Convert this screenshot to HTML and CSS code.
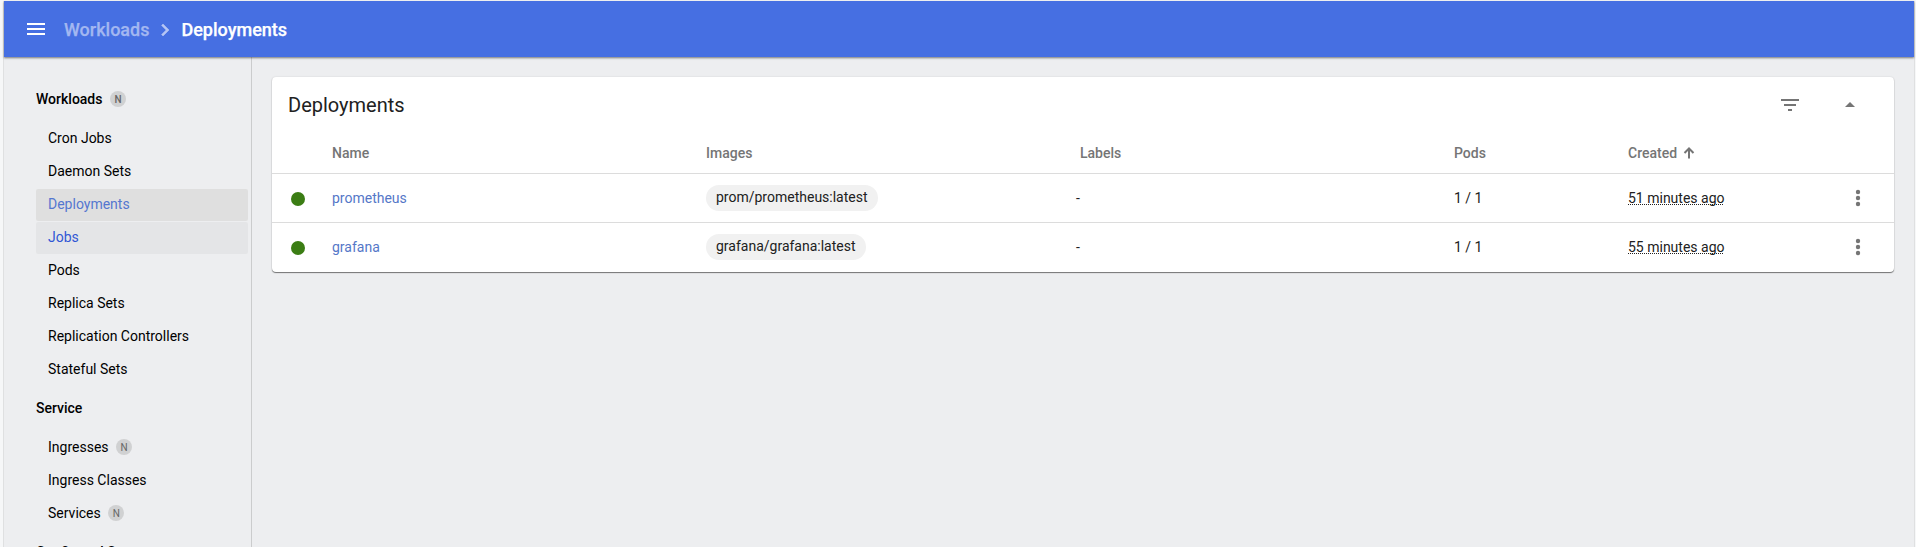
FILE: index.html
```html
<!DOCTYPE html>
<html lang="en">
<head>
<meta charset="utf-8">
<title>Deployments</title>
<link rel="stylesheet" href="styles.css">
</head>
<body>
<div class="app">
  <header class="toolbar">
    <svg class="menu-icon" width="24" height="24" viewBox="0 0 24 24"><path d="M3 18h18v-2H3v2zm0-5h18v-2H3v2zm0-7v2h18V6H3z"/></svg>
    <nav class="crumbs">
      <span class="crumb parent">Workloads</span>
      <svg class="chevron" width="24" height="24" viewBox="0 0 24 24"><path d="M10 6 8.59 7.41 13.17 12l-4.58 4.59L10 18l6-6z"/></svg>
      <span class="crumb">Deployments</span>
    </nav>
  </header>
  <div class="body">
    <aside class="sidebar">
      <div class="group">Workloads<span class="badge">N</span></div>
      <div class="item">Cron Jobs</div>
      <div class="item">Daemon Sets</div>
      <div class="item active">Deployments</div>
      <div class="item hover">Jobs</div>
      <div class="item">Pods</div>
      <div class="item">Replica Sets</div>
      <div class="item">Replication Controllers</div>
      <div class="item">Stateful Sets</div>
      <div class="group">Service</div>
      <div class="item">Ingresses<span class="badge">N</span></div>
      <div class="item">Ingress Classes</div>
      <div class="item">Services<span class="badge">N</span></div>
      <div class="group">Config and Storage</div>
    </aside>
    <main class="content">
      <section class="card">
        <div class="card-head">
          <h1 class="title">Deployments</h1>
          <svg class="icon filter" width="24" height="24" viewBox="0 0 24 24"><path d="M10 18h4v-2h-4v2zM3 6v2h18V6H3zm3 7h12v-2H6v2z"/></svg>
          <svg class="icon" width="24" height="24" viewBox="0 0 24 24"><path d="m7 14 5-5 5 5z"/></svg>
        </div>
        <div class="row head">
          <span></span><span>Name</span><span>Images</span><span>Labels</span><span>Pods</span>
          <span class="sorted">Created<svg width="12" height="12" viewBox="0 0 12 12"><path d="M6 11.5V1.5M1.500 6 6 1.500 10.500 6"/></svg></span>
          <span></span>
        </div>
        <div class="row">
          <span class="status"></span><a class="link">prometheus</a>
          <span><span class="chip">prom/prometheus:latest</span></span><span class="none">-</span><span>1 / 1</span>
          <span><span class="age">51 minutes ago</span></span>
          <svg class="icon more" width="24" height="24" viewBox="0 0 24 24"><circle cx="12" cy="6" r="2.200"/><circle cx="12" cy="12" r="2.200"/><circle cx="12" cy="18" r="2.200"/></svg>
        </div>
        <div class="row">
          <span class="status"></span><a class="link">grafana</a>
          <span><span class="chip">grafana/grafana:latest</span></span><span class="none">-</span><span>1 / 1</span>
          <span><span class="age">55 minutes ago</span></span>
          <svg class="icon more" width="24" height="24" viewBox="0 0 24 24"><circle cx="12" cy="6" r="2.200"/><circle cx="12" cy="12" r="2.200"/><circle cx="12" cy="18" r="2.200"/></svg>
        </div>
      </section>
    </main>
  </div>
</div>
</body>
</html>
```
FILE: styles.css
```css
* { box-sizing: border-box; }
html { background: #f6f7f8; }
body { margin: 0; height: 547px; overflow: hidden; padding: 1px 2px 0 4px; font: 14px/20px Roboto, sans-serif; color: #212121; }
.app { height: 546px; background: #edeef0; display: flex; flex-direction: column; box-shadow: -1px 0 #dfe0e1, 1px 0 #dfe0e1; }
.toolbar { flex: none; height: 56px; background: #466fe2; display: flex; align-items: center; padding-left: 20px; box-shadow: 0 1px 2px rgba(0,0,0,.5); position: relative; fill: #fff; }
.crumbs { display: flex; align-items: center; margin-left: 16px; font-size: 18px; font-weight: 500; color: #fff; -webkit-text-stroke: .25px; }
.crumb { padding-top: 2px; }
.parent { color: #a3b7f1; }
.chevron { margin: 2px 4px 0 4px; fill: #b5c5f4; stroke: #b5c5f4; stroke-width: .6; }
.body { display: flex; flex: 1; min-height: 0; }
.sidebar { width: 248px; flex: none; border-right: 1px solid #cbcccd; padding: 26px 3px 0 32px; overflow: hidden; color: #000; }
.group { height: 32px; margin: 6px 0 8px; display: flex; align-items: center; font-weight: 500; }
.group:first-child { margin-top: 0; }
.item { height: 32px; margin-bottom: 1px; padding: 0 0 2px 12px; display: flex; align-items: center; border-radius: 2px; }
.active { background: #dfdfdf; color: #5577d0; }
.hover { background: #e4e5e7; color: #3157d5; }
.badge { width: 16px; height: 16px; border-radius: 50%; background: #d0d1d2; color: #666; font-size: 10px; font-weight: 500; line-height: 17px; text-align: center; margin-left: 7.5px; }
.item .badge { font-weight: 400; }
.content { flex: 1; padding: 20px 20px 0; }
.card { height: 195px; background: #fff; border-radius: 4px; overflow: hidden; box-shadow: 0 1px 1px rgba(0,0,0,.5), 0 0 2px rgba(0,0,0,.12); }
.card-head { height: 56px; display: flex; align-items: center; padding: 0 32px 0 16px; }
.title { flex: 1; margin: 0; font-size: 20px; line-height: 24px; font-weight: 400; }
.icon { fill: #757575; }
.filter { margin-right: 36px; }
.row { display: grid; grid-template-columns: 60px 374px 374px 374px 174px 218px 1fr; align-items: center; height: 49px; border-top: 1px solid #dcdcdc; }
.head { height: 40px; border-top: 0; color: #757575; font-weight: 500; }
.sorted { display: flex; align-items: center; gap: 6px; }
.sorted svg { fill: none; stroke: #757575; stroke-width: 2; }
.status { width: 14px; height: 14px; border-radius: 50%; background: #3b7d14; margin: 2px 0 0 19px; }
.link { color: #5577c8; }
.chip { display: inline-block; height: 26px; line-height: 24px; padding: 0 10px; border-radius: 13px; background: #f1f1f1; }
.none { margin-left: -4px; }
.age { text-decoration: underline dotted 1px; text-decoration-skip-ink: none; text-underline-offset: 1px; }
.more { justify-self: start; }
```
